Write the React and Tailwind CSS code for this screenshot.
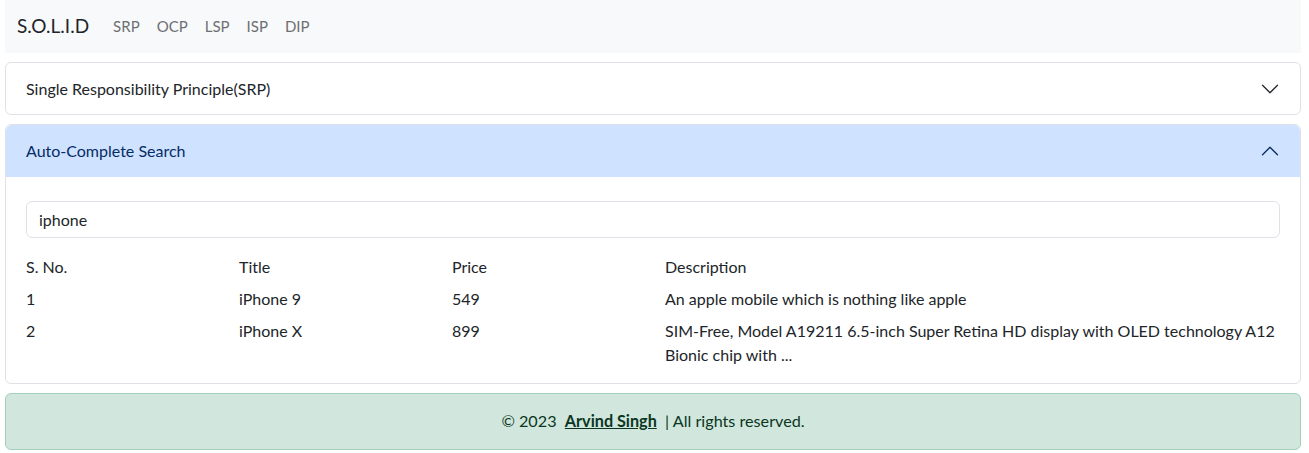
const products = [
  { id: 1, title: 'iPhone 9', price: 549, description: ['An apple mobile which is nothing like apple'] },
  {
    id: 2,
    title: 'iPhone X',
    price: 899,
    description: ['SIM-Free, Model A19211 6.5-inch Super Retina HD display with OLED technology A12', 'Bionic chip with ...'],
  },
]

const navLinks = ['SRP', 'OCP', 'LSP', 'ISP', 'DIP']

// bootstrap accordion chevron
const Chevron = ({ up }) => (
  <svg width="20" height="20" viewBox="0 0 16 16" fill="currentColor" className={up ? 'rotate-180' : ''}>
    <path
      fillRule="evenodd"
      d="M1.646 4.646a.5.5 0 0 1 .708 0L8 10.293l5.646-5.647a.5.5 0 0 1 .708.708l-6 6a.5.5 0 0 1-.708 0l-6-6a.5.5 0 0 1 0-.708z"
    />
  </svg>
)

const App = () => {
  return (
    <div className="min-h-screen bg-white pl-[5px] pr-[8px] text-[#212529] font-['Lato','Segoe_UI',sans-serif]">
      {/* Navbar */}
      <nav className="flex h-[53px] items-center bg-[#f8f9fa] px-3">
        <span className="text-[19px] text-[#212529]">S.O.L.I.D</span>
        <div className="ml-[24px] flex gap-[17px] text-[15px] text-[#6c6f72]">
          {navLinks.map((link) => (
            <a key={link} href="#" className="hover:text-black">{link}</a>
          ))}
        </div>
      </nav>

      {/* SRP accordion */}
      <div className="mt-[9px] rounded-[6px] border border-[#dee2e6]">
        <button className="flex h-[51px] w-full items-center justify-between px-5 pt-px text-left text-[16px]">
          <span>Single Responsibility Principle(SRP)</span>
          <Chevron />
        </button>
      </div>

      {/* Auto-complete accordion */}
      <div className="mt-[9px] rounded-[6px] border border-[#dee2e6]">
        <button className="flex h-[52px] w-full items-center justify-between rounded-t-[6px] bg-[#cfe2ff] px-5 text-left text-[16px] text-[#052c65]">
          <span>Auto-Complete Search</span>
          <Chevron up />
        </button>
        <div className="px-5 pt-6 pb-[12px]">
          <input
            type="text"
            defaultValue="iphone"
            className="h-[37px] w-full rounded-[6px] border border-[#dee2e6] px-3 text-[16px] text-[#212529] outline-none"
          />
          <table className="mt-[13px] w-full text-[16px]">
            <thead>
              <tr>
                <th className="w-[213px] py-1 text-left font-normal leading-6">S. No.</th>
                <th className="w-[213px] py-1 text-left font-normal leading-6">Title</th>
                <th className="w-[213px] py-1 text-left font-normal leading-6">Price</th>
                <th className="py-1 text-left font-normal leading-6">Description</th>
              </tr>
            </thead>
            <tbody>
              {products.map((item, index) => (
                <tr key={item.id}>
                  <td className="py-1 align-top leading-6">{index + 1}</td>
                  <td className="py-1 align-top leading-6">{item.title}</td>
                  <td className="py-1 align-top leading-6">{item.price}</td>
                  <td className="py-1 align-top leading-6">
                    {item.description.map((line) => (
                      <div key={line}>{line}</div>
                    ))}
                  </td>
                </tr>
              ))}
            </tbody>
          </table>
        </div>
      </div>

      {/* Footer */}
      <footer className="mt-[9px] flex h-[57px] items-center justify-center rounded-[6px] border border-[#a3cfbb] bg-[#d1e7dd] text-[16.2px] text-[#0a3622]">
        <span>© 2023&nbsp;&nbsp;<a href="#" className="font-bold underline">Arvind Singh</a>&nbsp;&nbsp;| All rights reserved.</span>
      </footer>
    </div>
  )
}

export default App
